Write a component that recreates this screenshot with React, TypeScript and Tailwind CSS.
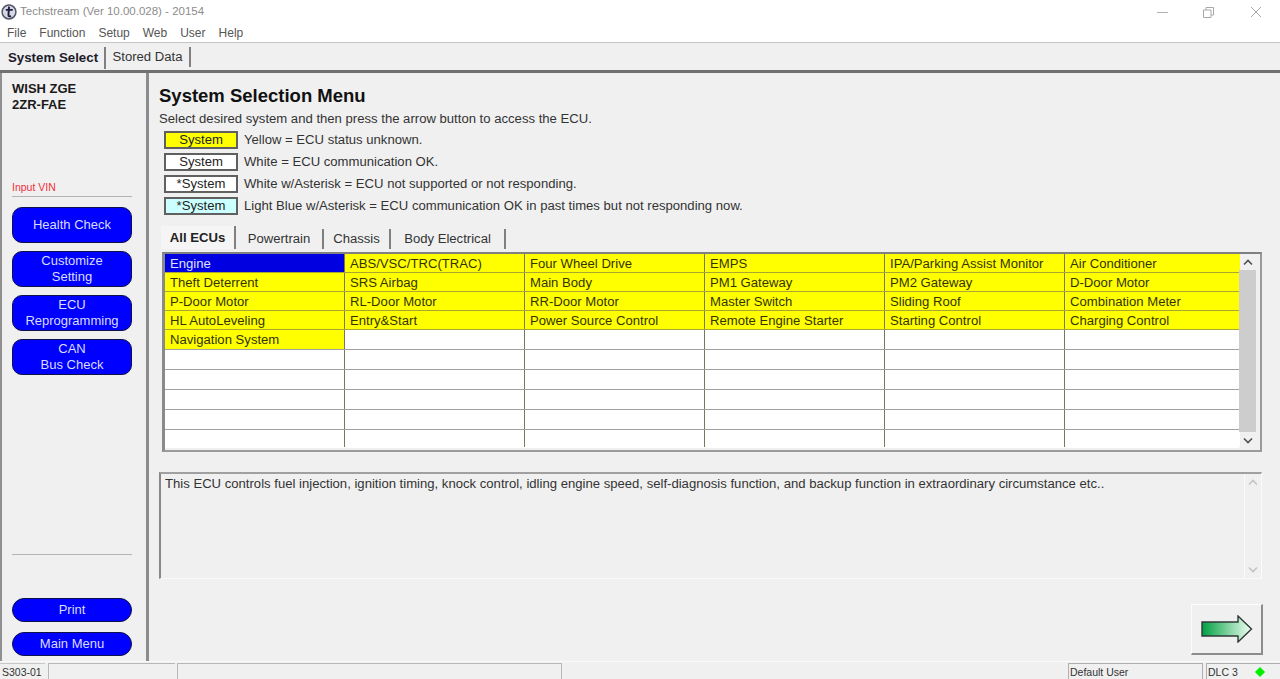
import React from 'react';

const rows: string[][] = [
  ['Engine', 'ABS/VSC/TRC(TRAC)', 'Four Wheel Drive', 'EMPS', 'IPA/Parking Assist Monitor', 'Air Conditioner'],
  ['Theft Deterrent', 'SRS Airbag', 'Main Body', 'PM1 Gateway', 'PM2 Gateway', 'D-Door Motor'],
  ['P-Door Motor', 'RL-Door Motor', 'RR-Door Motor', 'Master Switch', 'Sliding Roof', 'Combination Meter'],
  ['HL AutoLeveling', 'Entry&Start', 'Power Source Control', 'Remote Engine Starter', 'Starting Control', 'Charging Control'],
  ['Navigation System', '', '', '', '', ''],
  ['', '', '', '', '', ''],
  ['', '', '', '', '', ''],
  ['', '', '', '', '', ''],
  ['', '', '', '', '', ''],
  ['', '', '', '', '', ''],
];

const rowHeights = ['h-[19px]', 'h-[19px]', 'h-[19px]', 'h-[19px]', 'h-[20px]', 'h-[20px]', 'h-[20px]', 'h-[20px]', 'h-[20px]', 'h-[17px]'];
const colWidths = ['w-[180px]', 'w-[180px]', 'w-[180px]', 'w-[180px]', 'w-[180px]', 'w-[175px]'];

const legend = [
  { label: 'System', bg: 'bg-[#ffff00]', text: 'Yellow = ECU status unknown.' },
  { label: 'System', bg: 'bg-white', text: 'White = ECU communication OK.' },
  { label: '*System', bg: 'bg-white', text: 'White w/Asterisk = ECU not supported or not responding.' },
  { label: '*System', bg: 'bg-[#ccffff]', text: 'Light Blue w/Asterisk = ECU communication OK in past times but not responding now.' },
];

const SideButton = ({ lines, tall = true }: { lines: string[]; tall?: boolean }) => (
  <div className={`w-[120px] bg-[#0000ff] border border-[#10104a] text-[#d8dcff] text-[13px] leading-[16px] flex flex-col items-center justify-center ${tall ? 'h-[36px] rounded-[10px]' : 'h-[24px] rounded-[12px]'}`}>
    {lines.map((l) => (
      <span key={l}>{l}</span>
    ))}
  </div>
);

const Chevron = ({ up, color = '#505050' }: { up: boolean; color?: string }) => (
  <svg width="10" height="7" viewBox="0 0 10 7">
    <path d={up ? 'M1 5.5L5 1.5L9 5.5' : 'M1 1.5L5 5.5L9 1.5'} fill="none" stroke={color} strokeWidth="1.6" />
  </svg>
);

export default function App() {
  return (
    <div className="w-[1280px] h-[679px] overflow-hidden flex flex-col bg-[#f0f0f0] text-[#222] text-[13.12px] font-['Liberation_Sans',Arial,sans-serif]">
      {/* Title bar */}
      <div className="h-[24px] bg-white flex items-center pl-[1px] shrink-0">
        <svg width="16" height="16" viewBox="0 0 15 15" className="mr-[3px]">
          <circle cx="7.5" cy="7.5" r="6.5" fill="#d8d8e0" stroke="#55556a" strokeWidth="1.4" />
          <path d="M7.5 2.5L7 10.5Q7 12 9.5 11.5M4.5 5.5H11" fill="none" stroke="#1d1d44" strokeWidth="1.8" />
        </svg>
        <span className="text-[#8c8c8c] text-[11.5px]">Techstream (Ver 10.00.028) - 20154</span>
        <div className="ml-auto flex items-center">
          <div className="w-[11px] h-[1px] bg-[#b0b0b0] mr-[35px]" />
          <svg width="11" height="11" viewBox="0 0 11 11" className="mr-[36px]">
            <path d="M0.5 3H8V10.5H0.5ZM3 3V0.5H10.5V8H8" fill="none" stroke="#a8a8a8" />
          </svg>
          <svg width="12" height="12" viewBox="0 0 12 12" className="mr-[18px]">
            <path d="M1 1L11 11M11 1L1 11" fill="none" stroke="#a8a8a8" />
          </svg>
        </div>
      </div>

      {/* Menu */}
      <div className="h-[19px] bg-white flex items-center gap-[13px] pl-[7px] text-[12px] text-[#555] border-b border-[#c4c4c4] shrink-0">
        {['File', 'Function', 'Setup', 'Web', 'User', 'Help'].map((m) => (
          <span key={m}>{m}</span>
        ))}
      </div>

      {/* Top tabs */}
      <div className="h-[30px] flex items-center pl-[2px] shrink-0 border-b-[3px] border-[#707070]">
        <div className="h-[22px] w-[104px] flex items-center justify-center font-bold text-[13.3px] border-r-2 border-[#808080] text-[#1c1c2c] translate-y-[1px]">
          System Select
        </div>
        <div className="h-[20px] w-[85px] flex items-center justify-center border-r-2 border-[#808080] text-[#333]">
          Stored Data
        </div>
      </div>

      {/* Body */}
      <div className="flex-1 flex min-h-0">
        {/* Sidebar */}
        <aside className="w-[149px] shrink-0 flex flex-col border-l-2 border-[#909090] border-r-[3px] border-r-[#8c8c8c] pl-[10px] pr-[14px] pt-[8px]">
          <div className="font-bold text-[13px] leading-[16px] text-[#1a1a1a]">
            WISH ZGE
            <br />
            2ZR-FAE
          </div>
          <div className="text-[#f03040] text-[10.5px] mt-[67px] leading-[14px]">Input VIN</div>
          <div className="h-px bg-[#b4b4b4] mt-[2px] mb-[10px]" />
          <div className="flex flex-col gap-[8px]">
            <SideButton lines={['Health Check']} />
            <SideButton lines={['Customize', 'Setting']} />
            <SideButton lines={['ECU', 'Reprogramming']} />
            <SideButton lines={['CAN', 'Bus Check']} />
          </div>
          <div className="h-px bg-[#b4b4b4] mt-[179px] mb-[43px]" />
          <div className="flex flex-col gap-[10px]">
            <SideButton lines={['Print']} tall={false} />
            <SideButton lines={['Main Menu']} tall={false} />
          </div>
        </aside>

        {/* Main */}
        <main className="flex-1 min-w-0 pl-[10px] pr-[18px] pt-[12px] flex flex-col">
          <h1 className="font-bold text-[18.5px] leading-[22px] text-[#111]">System Selection Menu</h1>
          <p className="leading-[16px] mt-[4px] text-[#333]">Select desired system and then press the arrow button to access the ECU.</p>
          <div className="flex flex-col gap-[4px] mt-[4px] pl-[5px]">
            {legend.map((l) => (
              <div key={l.text} className="flex items-center h-[18px] gap-[6px]">
                <div className={`w-[74px] h-[18px] border-2 border-[#606060] flex items-center justify-center leading-none pb-[1px] -translate-x-0 ${l.bg}`}>{l.label}</div>
                <span className="text-[#333]">{l.text}</span>
              </div>
            ))}
          </div>

          {/* ECU tabs */}
          <div className="flex items-end h-[24px] mt-[10px] pl-[2px]">
            <div className="w-[75px] h-[23px] flex items-center justify-center font-bold border-r-2 border-[#808080] bg-[#f5f5f5] pt-[1px]">All ECUs</div>
            <div className="w-[88px] h-[20px] flex items-center justify-center border-r-2 border-[#808080] text-[#333]">Powertrain</div>
            <div className="w-[67px] h-[20px] flex items-center justify-center border-r-2 border-[#808080] text-[#333]">Chassis</div>
            <div className="w-[115px] h-[20px] flex items-center justify-center border-r-2 border-[#808080] text-[#333]">Body Electrical</div>
          </div>

          {/* Grid */}
          <div className="h-[200px] mt-[3px] ml-[3px] border-t-[2px] border-t-[#808080] border-l-[3px] border-l-[#8a8a8a] border-r-[2px] border-r-[#9a9a9a] border-b-[2px] border-b-[#9a9a9a] pr-[4px] pb-[2px] flex">
            <div className="flex-1 min-w-0 flex flex-col bg-white">
              {rows.map((r, ri) => (
                <div key={ri} className={`flex shrink-0 border-b last:border-b-0 ${ri < 4 ? 'border-[#a8a830]' : 'border-[#a0a0a0]'} ${rowHeights[ri]}`}>
                  {r.map((c, ci) => {
                    const selected = ri === 0 && ci === 0;
                    const filled = c !== '';
                    return (
                      <div
                        key={ci}
                        className={`${colWidths[ci]} shrink-0 pl-[5px] leading-[19px] whitespace-nowrap overflow-hidden ${ci < 5 ? 'border-r border-[#787860]' : ''} ${selected ? 'bg-[#0000e0] text-[#e0e0ff]' : filled ? 'bg-[#ffff00] text-[#333300]' : 'bg-white'}`}
                      >
                        {c}
                      </div>
                    );
                  })}
                </div>
              ))}
            </div>
            <div className="w-[17px] shrink-0 flex flex-col items-center">
              <div className="h-[16px] flex items-center justify-center"><Chevron up /></div>
              <div className="flex-1 w-full bg-[#cdcdcd]" />
              <div className="h-[16px] flex items-center justify-center"><Chevron up={false} /></div>
            </div>
          </div>

          {/* Description */}
          <div className="h-[107px] mt-[20px] border-l-2 border-t-2 border-l-[#888] border-t-[#a0a0a0] border-r border-b border-r-[#fafafa] border-b-[#fafafa] flex">
            <p className="flex-1 min-w-0 pl-[4px] pt-[2px] leading-[16px] text-[#333] whitespace-nowrap">
              This ECU controls fuel injection, ignition timing, knock control, idling engine speed, self-diagnosis function, and backup function in extraordinary circumstance etc..
            </p>
            <div className="w-[17px] shrink-0 border-l border-[#fafafa] flex flex-col items-center justify-between py-[5px]">
              <Chevron up color="#c4c4c4" />
              <Chevron up={false} color="#c4c4c4" />
            </div>
          </div>

          {/* Arrow button */}
          <div className="self-end w-[72px] h-[51px] mt-[25px] -mr-[1px] border border-t-[#fcfcfc] border-l-[#fcfcfc] border-r-2 border-b-2 border-r-[#8c8c8c] border-b-[#8c8c8c] flex items-center justify-center">
            <svg width="52" height="28" viewBox="0 0 52 28">
              <defs>
                <linearGradient id="arrowFill" x1="0" x2="1" y1="0" y2="0">
                  <stop offset="0" stopColor="#00a040" />
                  <stop offset="1" stopColor="#f0fff4" />
                </linearGradient>
              </defs>
              <path d="M1 7H37V1L50.5 14L37 27V21H1Z" fill="url(#arrowFill)" stroke="#303838" strokeWidth="1.4" />
            </svg>
          </div>
        </main>
      </div>

      {/* Status bar */}
      <div className="h-[18px] shrink-0 flex text-[10.5px] leading-[16px] text-[#333] pt-[1px] border-t border-[#fafafa]">
        <div className="w-[45px] pl-[2px] border-t border-[#c8c8c8]">S303-01</div>
        <div className="w-[127px] ml-[3px] border-t border-l border-[#b8b8b8]" />
        <div className="w-[385px] ml-[2px] border-t border-l border-r border-[#b8b8b8]" />
        <div className="w-[135px] ml-[506px] pl-[1px] border-t border-l border-r border-[#b0b0b0]">Default User</div>
        <div className="flex-1 ml-[3px] pl-[1px] flex items-center border-t border-l border-[#b0b0b0]">
          <span>DLC 3</span>
          <div className="w-[8px] h-[8px] ml-[18px] bg-[#00f000] rotate-45 scale-90" />
        </div>
      </div>
    </div>
  );
}
